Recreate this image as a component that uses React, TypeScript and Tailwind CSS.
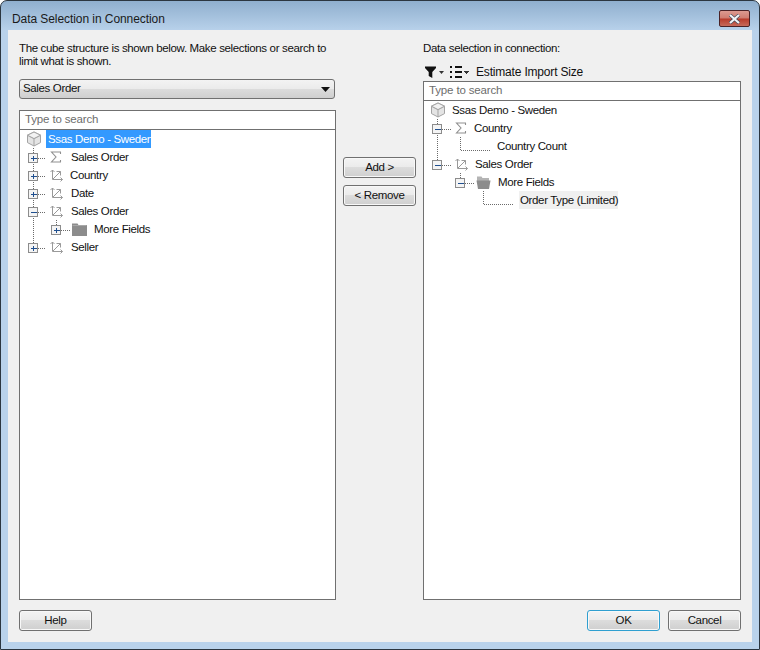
const fontStack = "font-['Liberation_Sans',Arial,sans-serif]";
const bodyText = "text-[11.5px] tracking-[-0.35px]";

const dots = "#6a6a6a";

function Guides({ width, lines, boxes }: { width: number; lines?: string[]; boxes?: { x: number; minus?: boolean }[] }) {
  return (
    <svg width={width} height={18} className="shrink-0" shapeRendering="crispEdges">
      {(lines ?? []).map((d, i) => (
        <path key={i} d={d} stroke={dots} strokeWidth={1} strokeDasharray="1 1" fill="none" />
      ))}
      {(boxes ?? []).map((b, i) => (
        <g key={i}>
          <rect x={b.x - 4.5} y={5.5} width={9} height={9} fill="#f4f4f4" stroke="#8c8c8c" />
          <path d={`M${b.x - 2.5} 10.5h6`} stroke="#1f4f8f" />
          {!b.minus && <path d={`M${b.x + 0.5} 8v5`} stroke="#1f4f8f" />}
        </g>
      ))}
    </svg>
  );
}

function CubeIcon() {
  return (
    <svg width={16} height={16} viewBox="0 0 16 16" className="shrink-0">
      <path d="M8 1 14.5 4.2V11.6L8 15 1.5 11.6V4.2Z" fill="#e4e4e4" stroke="#a3a3a3" />
      <path d="M1.5 4.2 8 7.6 14.5 4.2M8 7.6V15" fill="none" stroke="#a3a3a3" />
      <path d="M8 1 14.5 4.2 8 7.6 1.5 4.2Z" fill="#f2f2f2" stroke="#a3a3a3" />
    </svg>
  );
}

function SigmaIcon() {
  return (
    <svg width={12} height={12} viewBox="0 0 12 12" className="shrink-0">
      <path d="M10.5 3V1H1.5L6 6 1.5 11H10.5V9" fill="none" stroke="#8f8f8f" strokeWidth={1.1} />
    </svg>
  );
}

function AxisIcon() {
  return (
    <svg width={13} height={13} viewBox="0 0 13 13" className="shrink-0">
      <path d="M2.5 1V10.5H12.5" fill="none" stroke="#9a9a9a" />
      <path d="M0.5 3 2.5 1 4.5 3M10.5 8.5 12.5 10.5 10.5 12.5" fill="none" stroke="#9a9a9a" />
      <path d="M3 10 10.5 2.5M6.5 2.5H10.5V6.5" fill="none" stroke="#9a9a9a" />
    </svg>
  );
}

function FolderIcon() {
  return (
    <svg width={15} height={14} viewBox="0 0 15 14" className="shrink-0">
      <path d="M0 1.5H5.5L6.5 3H15V14H0Z" fill="#8c8c8c" />
      <path d="M0.5 3.5H14.5" stroke="#a8a8a8" />
    </svg>
  );
}

function OpenFolderIcon() {
  return (
    <svg width={15} height={13} viewBox="0 0 15 13" className="shrink-0">
      <path d="M1 0.5H5.5L6.5 2H13V5H1Z" fill="#b4b4b4" />
      <path d="M0.5 4.5H14.5L13 13H2Z" fill="#8c8c8c" />
    </svg>
  );
}

function FunnelIcon() {
  return (
    <svg width={19} height={12} viewBox="0 0 19 12">
      <path d="M0 0.5H11V2L7.3 6V12L3.7 10V6L0 2Z" fill="#111" />
      <path d="M14 5H19L16.5 8Z" fill="#333" />
    </svg>
  );
}

function ListIcon() {
  return (
    <svg width={19} height={12} viewBox="0 0 19 12" shapeRendering="crispEdges">
      <path d="M0 0h2v2H0zM0 5h2v2H0zM0 10h2v2H0z" fill="#111" />
      <path d="M5 0h7v2H5zM5 5h7v2H5zM5 10h7v2H5z" fill="#111" />
      <path d="M14 5H19L16.5 8Z" fill="#333" />
    </svg>
  );
}

function Button({ label, primary }: { label: string; primary?: boolean }) {
  return (
    <button
      className={`h-[21px] w-[73px] rounded-[3px] border bg-[linear-gradient(#f3f3f3_0%,#ebebeb_48%,#dcdcdc_50%,#cfcfcf_100%)] ${bodyText} text-[#111] shadow-[inset_0_0_0_1px_#f8f8f8] ${
        primary ? "border-[#2f9fd0] shadow-[inset_0_0_0_1px_#7fdcf5]" : "border-[#707070]"
      }`}
    >
      {label}
    </button>
  );
}

function SearchBox() {
  return (
    <div className="flex h-[19px] shrink-0 items-center border-b border-[#707070] pl-[5px] text-[11.5px] tracking-[-0.15px] text-[#6d6d6d]">
      Type to search
    </div>
  );
}

function Label({ text, left }: { text: string; left: number }) {
  return (
    <span className={`flex h-[18px] items-center whitespace-nowrap pt-[2px] ${bodyText} text-[#111]`} style={{ marginLeft: left }}>
      {text}
    </span>
  );
}

function Row({ children }: { children: React.ReactNode }) {
  return <div className="flex h-[18px] items-center">{children}</div>;
}

function LeftTree() {
  const trunk = "M13.5 0V18";
  const stub = "M18 10.5H26";
  return (
    <div className="flex flex-col">
      <Row>
        <div className="ml-[6px]">
          <CubeIcon />
        </div>
        <span className={`ml-[4px] flex h-[18px] w-[105px] items-center whitespace-nowrap bg-[#3399ff] pl-[2px] pt-[2px] ${bodyText} text-white`}>
          Ssas Demo - Sweden
        </span>
      </Row>
      <Row>
        <Guides width={30} lines={[trunk, stub]} boxes={[{ x: 13 }]} />
        <SigmaIcon />
        <Label text="Sales Order" left={9} />
      </Row>
      <Row>
        <Guides width={30} lines={[trunk, stub]} boxes={[{ x: 13 }]} />
        <AxisIcon />
        <Label text="Country" left={7} />
      </Row>
      <Row>
        <Guides width={30} lines={[trunk, stub]} boxes={[{ x: 13 }]} />
        <AxisIcon />
        <Label text="Date" left={8} />
      </Row>
      <Row>
        <Guides width={30} lines={[trunk, stub]} boxes={[{ x: 13, minus: true }]} />
        <AxisIcon />
        <Label text="Sales Order" left={8} />
      </Row>
      <Row>
        <Guides width={52} lines={[trunk, "M36.5 0V6", "M41 10.5H50"]} boxes={[{ x: 36 }]} />
        <FolderIcon />
        <Label text="More Fields" left={7} />
      </Row>
      <Row>
        <Guides width={30} lines={["M13.5 0V6", stub]} boxes={[{ x: 13 }]} />
        <AxisIcon />
        <Label text="Seller" left={8} />
      </Row>
    </div>
  );
}

function RightTree() {
  return (
    <div className="flex flex-col">
      <Row>
        <div className="ml-[6px]">
          <CubeIcon />
        </div>
        <Label text="Ssas Demo - Sweden" left={6} />
      </Row>
      <Row>
        <Guides width={31} lines={["M13.5 0V18", "M18 10.5H28"]} boxes={[{ x: 13, minus: true }]} />
        <SigmaIcon />
        <Label text="Country" left={7} />
      </Row>
      <Row>
        <Guides width={73} lines={["M13.5 0V18", "M36.5 0V13", "M37 13.5H67"]} />
        <Label text="Country Count" left={0} />
      </Row>
      <Row>
        <Guides width={31} lines={["M13.5 0V6", "M18 10.5H28"]} boxes={[{ x: 13, minus: true }]} />
        <AxisIcon />
        <Label text="Sales Order" left={7} />
      </Row>
      <Row>
        <Guides width={52} lines={["M36.5 0V6", "M41 10.5H50"]} boxes={[{ x: 36, minus: true }]} />
        <OpenFolderIcon />
        <Label text="More Fields" left={7} />
      </Row>
      <Row>
        <Guides width={95} lines={["M59.5 0V13", "M60 13.5H89"]} />
        <span className={`flex h-[18px] w-[99px] items-center whitespace-nowrap bg-[#f0f0f0] pl-[1px] pt-[2px] ${bodyText} text-[#111]`}>
          Order Type (Limited)
        </span>
      </Row>
    </div>
  );
}

export default function App() {
  return (
    <div
      className={`${fontStack} flex h-[650px] w-[760px] flex-col overflow-hidden rounded-t-[7px] border border-[#2b3640] bg-[linear-gradient(#8fafce_0px,#b9d2eb_30px,#b9d2eb_100%)] px-[7px] pb-[7px]`}
    >
      <div className="flex h-[29px] shrink-0 items-start justify-between">
        <span className="ml-[4px] mt-[11px] text-[12px] leading-[14px] tracking-[-0.07px] text-[#1a1a1a]">Data Selection in Connection</span>
        <button className="mr-[2px] mt-[9px] flex h-[17px] w-[31px] items-center justify-center rounded-[2px] border border-[#4a2226] bg-[linear-gradient(#dc9a90_0%,#cf7c70_48%,#b83a2a_52%,#c66a5a_100%)]">
          <svg width={13} height={10} viewBox="0 0 13 10">
            <path d="M2 1 11 9M11 1 2 9" stroke="#3d4a5a" strokeWidth={3.4} />
            <path d="M2 1 11 9M11 1 2 9" stroke="#f2f4f7" strokeWidth={2.2} />
          </svg>
        </button>
      </div>

      <div className="flex min-h-0 flex-1 flex-col bg-[#f0f0f0] px-[11px] pb-[11px] pt-[12px] text-[#111]">
        <div className="flex min-h-0 flex-1 gap-[7px]">
          <div className="flex w-[317px] flex-col">
            <p className={`w-[312px] ${bodyText} leading-[13px]`}>
              The cube structure is shown below. Make selections or search to limit what is shown.
            </p>
            <div
              className={`mb-[11px] mr-[1px] mt-[11px] flex h-[20px] shrink-0 items-center justify-between rounded-[3px] border border-[#707070] bg-[linear-gradient(#f3f3f3_0%,#ebebeb_48%,#dcdcdc_50%,#cfcfcf_100%)] pl-[3px] pr-[4px] ${bodyText}`}
            >
              <span>Sales Order</span>
              <svg width={9} height={5} viewBox="0 0 9 5">
                <path d="M0 0H9L4.5 5Z" fill="#111" />
              </svg>
            </div>
            <div className="flex min-h-0 flex-1 flex-col border border-[#707070] bg-white">
              <SearchBox />
              <LeftTree />
            </div>
          </div>

          <div className="flex w-[73px] flex-col gap-[7px] pt-[115px]">
            <Button label="Add >" />
            <Button label="< Remove" />
          </div>

          <div className="flex w-[318px] flex-col">
            <p className={`${bodyText} leading-[13px]`}>Data selection in connection:</p>
            <div className="mt-[8px] flex h-[18px] shrink-0 items-center pl-[2px]">
              <FunnelIcon />
              <div className="ml-[6px]">
                <ListIcon />
              </div>
              <span className="ml-[7px] text-[12px] tracking-[-0.18px]">Estimate Import Size</span>
            </div>
            <div className="flex min-h-0 flex-1 flex-col border border-[#707070] bg-white">
              <SearchBox />
              <RightTree />
            </div>
          </div>
        </div>

        <div className="mt-[10px] flex shrink-0 items-center justify-between">
          <Button label="Help" />
          <div className="flex gap-[8px]">
            <Button label="OK" primary />
            <Button label="Cancel" />
          </div>
        </div>
      </div>
    </div>
  );
}
